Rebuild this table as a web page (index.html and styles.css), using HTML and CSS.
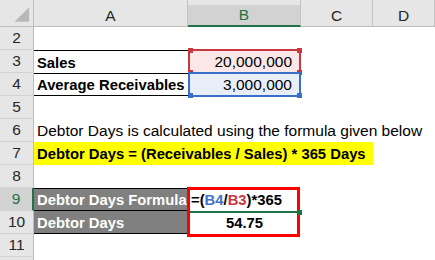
FILE: index.html
```html
<!DOCTYPE html>
<html>
<head>
<meta charset="utf-8">
<link rel="stylesheet" href="styles.css">
</head>
<body>
<div class="sheet">
  <div class="hdr">
    <div class="corner"><svg width="34" height="22" viewBox="0 0 34 22"><polygon points="15,18 30,3 30,18" fill="#b8b8b8"/></svg></div>
    <div class="colh">A</div>
    <div class="colh sel">B</div>
    <div class="colh">C</div>
    <div class="colh">D</div>
  </div>

  <div class="row"><div class="rh">2</div><div class="c"></div><div class="c"></div><div class="c"></div><div class="c"></div></div>

  <div class="row"><div class="rh">3</div><div class="c b bt">Sales</div><div class="c num pink">20,000,000<span class="ref red"><i class="h tl"></i><i class="h tr"></i><i class="h bl"></i><i class="h br"></i></span></div><div class="c"></div><div class="c"></div></div>

  <div class="row"><div class="rh">4</div><div class="c b bt bb">Average Receivables</div><div class="c num blue">3,000,000<span class="ref bl-ref"><i class="h bl"></i><i class="h br"></i></span></div><div class="c"></div><div class="c"></div></div>

  <div class="row"><div class="rh">5</div><div class="c"></div><div class="c"></div><div class="c"></div><div class="c"></div></div>

  <div class="row"><div class="rh">6</div><div class="c">Debtor Days is calculated using the formula given below</div><div class="c"></div><div class="c"></div><div class="c"></div></div>

  <div class="row"><div class="rh">7</div><div class="c b yellow span3">Debtor Days = (Receivables / Sales) * 365 Days</div><div class="c"></div></div>

  <div class="row"><div class="rh">8</div><div class="c"></div><div class="c"></div><div class="c"></div><div class="c"></div></div>

  <div class="row"><div class="rh selr">9</div><div class="c b grey bt bb">Debtor Days Formula</div><div class="c b formula">=(<span class="fb">B4</span>/<span class="fr">B3</span>)*365<span class="thick"></span><span class="active"></span><span class="fill"></span></div><div class="c"></div><div class="c"></div></div>

  <div class="row"><div class="rh">10</div><div class="c b grey bb">Debtor Days</div><div class="c b center">54.75</div><div class="c"></div><div class="c"></div></div>

  <div class="row"><div class="rh">11</div><div class="c"></div><div class="c"></div><div class="c"></div><div class="c"></div></div>

  <div class="row"><div class="rh"></div><div class="c"></div><div class="c"></div><div class="c"></div><div class="c"></div></div>
</div>
</body>
</html>
```

FILE: styles.css
```css
html, body {
  margin: 0;
  padding: 0;
  background: #fff;
}

.sheet {
  width: 435px;
  height: 260px;
  overflow: hidden;
  background: #fff;
  font-family: "Liberation Sans", Arial, sans-serif;
  font-size: 15.5px;
  color: #000;
}

.hdr,
.row {
  display: grid;
  grid-template-columns: 34px 154px 113px 72px 62px;
}

.hdr {
  height: 27px;
  background: #e6e6e6;
}

.hdr > div {
  box-sizing: border-box;
  border-bottom: 1px solid #bdbdbd;
  border-right: 1px solid #c4c4c4;
  padding-top: 5px;
  display: flex;
  align-items: center;
  justify-content: center;
  color: #262626;
}

.hdr .corner {
  padding-top: 0;
  align-items: flex-end;
  border-right-color: #bdbdbd;
}

.corner svg {
  display: block;
}

.colh.sel {
  background: linear-gradient(#e6e6e6 0 5px, #d2d2d2 5px);
  border-bottom: 2px solid #217346;
  color: #217346;
}

.row {
  height: 23px;
}

.rh {
  box-sizing: border-box;
  background: #e6e6e6;
  border-right: 1px solid #bdbdbd;
  border-bottom: 1px solid #d2d2d2;
  display: flex;
  align-items: center;
  justify-content: center;
  color: #262626;
}

.rh.selr {
  background: #d2d2d2;
  border-right: 2px solid #217346;
  color: #217346;
}

.c {
  box-sizing: border-box;
  position: relative;
  display: flex;
  align-items: center;
  padding: 1px 3px 0;
  white-space: nowrap;
}

.b {
  font-weight: bold;
  font-size: 14.8px;
}

.bt {
  border-top: 1px solid #000;
}

.bb {
  border-bottom: 1px solid #000;
}

.num {
  justify-content: flex-end;
  padding-right: 9px;
}

.center {
  justify-content: center;
}

.pink {
  background: #fbe7e7;
}

.blue {
  background: #e7eef9;
}

.yellow {
  background: #ffff00;
}

.span3 {
  grid-column: span 3;
}

.grey {
  background: #808080;
  color: #fff;
}

.fb {
  color: #4472c4;
}

.fr {
  color: #c8393f;
}

/* formula reference highlight boxes */
.ref {
  position: absolute;
  left: 0;
  right: 0;
  top: -1px;
  bottom: -1px;
  border: 2px solid #c8393f;
}

.ref.bl-ref {
  border-color: #3a6fc8;
}

.ref .h {
  position: absolute;
  width: 5px;
  height: 5px;
  background: #c8393f;
}

.ref.bl-ref .h {
  background: #3a6fc8;
}

.ref .tl { left: -2px; top: -3px; }
.ref .tr { right: -3px; top: -3px; }
.ref .bl { left: -2px; bottom: -3px; }
.ref .br { right: -3px; bottom: -3px; }

/* thick red outline around B9:B10 */
.thick {
  position: absolute;
  left: -1px;
  top: -1px;
  width: 113px;
  height: 50px;
  box-sizing: border-box;
  border: 3px solid #ff0000;
  z-index: 2;
}

/* active cell indicator */
.active {
  position: absolute;
  left: 2px;
  top: 23px;
  width: 107px;
  height: 2px;
  background: #217346;
  z-index: 3;
}

.fill {
  position: absolute;
  left: 109px;
  top: 22px;
  width: 5px;
  height: 5px;
  background: #217346;
  z-index: 3;
}
```
